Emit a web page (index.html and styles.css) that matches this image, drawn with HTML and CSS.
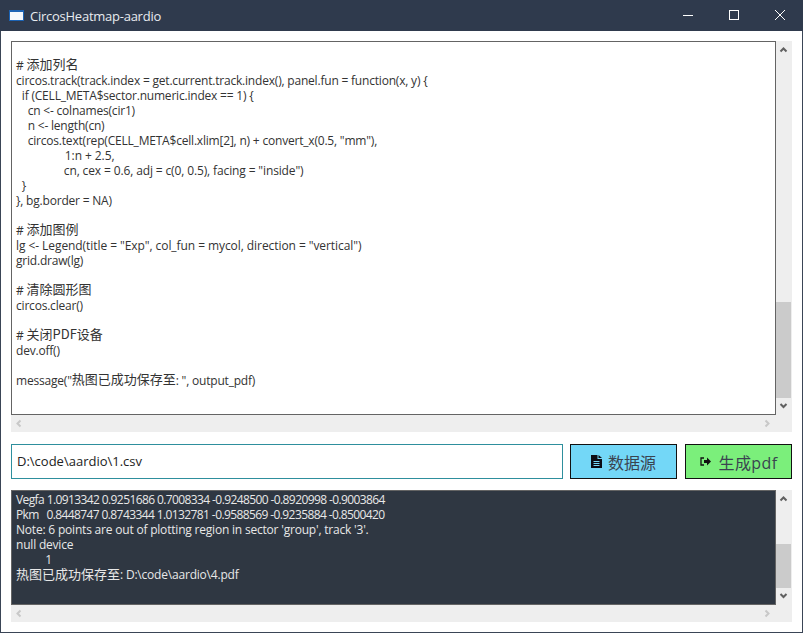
FILE: index.html
```html
<!DOCTYPE html>
<html lang="zh">
<head>
<meta charset="utf-8">
<title>CircosHeatmap-aardio</title>
<link rel="stylesheet" href="styles.css">
</head>
<body>
<div class="window">
  <header class="titlebar">
    <svg class="app-icon" width="15" height="11" viewBox="0 0 15 11"><rect width="15" height="11" fill="#1c63b4"/><rect x="1" y="2" width="13" height="8" fill="#f4f8fc"/></svg>
    <span class="title">CircosHeatmap-aardio</span>
    <div class="controls">
      <svg width="46" height="31" viewBox="0 0 46 31"><path d="M18 15.500h10" stroke="#fff" fill="none"/></svg>
      <svg width="46" height="31" viewBox="0 0 46 31"><rect x="18.500" y="10.500" width="9" height="9" stroke="#fff" fill="none"/></svg>
      <svg width="46" height="31" viewBox="0 0 46 31"><path d="M18 10l10 10M28 10l-10 10" stroke="#fff" fill="none"/></svg>
    </div>
  </header>
  <main class="content">
    <section class="pane pane-code">
      <div class="pane-row">
        <div class="textbox code">
          <div class="line"># <span class="cjk">添加列名</span></div>
          <div class="line">circos.track(track.index = get.current.track.index(), panel.fun = function(x, y) {</div>
          <div class="line">  if (CELL_META$sector.numeric.index == 1) {</div>
          <div class="line">    cn &lt;- colnames(cir1)</div>
          <div class="line">    n &lt;- length(cn)</div>
          <div class="line">    circos.text(rep(CELL_META$cell.xlim[2], n) + convert_x(0.5, "mm"),</div>
          <div class="line loose">                1:n + 2.5,</div>
          <div class="line mid">                cn, cex = 0.6, adj = c(0, 0.5), facing = "inside")</div>
          <div class="line">  }</div>
          <div class="line">}, bg.border = NA)</div>
          <div class="line"> </div>
          <div class="line"># <span class="cjk">添加图例</span></div>
          <div class="line loose">lg &lt;- Legend(title = "Exp", col_fun = mycol, direction = "vertical")</div>
          <div class="line">grid.draw(lg)</div>
          <div class="line"> </div>
          <div class="line"># <span class="cjk">清除圆形图</span></div>
          <div class="line">circos.clear()</div>
          <div class="line"> </div>
          <div class="line"># <span class="cjk">关闭PDF设备</span></div>
          <div class="line">dev.off()</div>
          <div class="line"> </div>
          <div class="line">message("<span class="cjk">热图已成功保存至</span>: ", output_pdf)</div>
        </div>
        <div class="vscroll">
          <svg class="arrow" width="16" height="16" viewBox="0 0 16 16"><path d="M4.500 10.500l3-3 3 3" stroke="#606060" stroke-width="2" fill="none"/></svg>
          <div class="track"></div>
          <div class="thumb thumb-code"></div>
          <svg class="arrow arrow-down" width="16" height="16" viewBox="0 0 16 16"><path d="M4.500 6l3 3 3-3" stroke="#606060" stroke-width="2" fill="none"/></svg>
        </div>
      </div>
      <div class="hscroll">
        <svg width="16" height="17" viewBox="0 0 16 17"><path d="M9.500 5.500l-3 3 3 3" stroke="#c8c8c8" stroke-width="2" fill="none"/></svg>
        <svg class="arrow-end" width="16" height="17" viewBox="0 0 16 17"><path d="M6.500 5.500l3 3-3 3" stroke="#c8c8c8" stroke-width="2" fill="none"/></svg>
      </div>
    </section>
    <section class="toolbar">
      <div class="path-input">D:\code\aardio\1.csv</div>
      <button class="btn btn-blue">
        <svg width="11" height="13" viewBox="0 0 11 13"><path d="M0 0h6.500v4H11v9H0z" fill="#0c0c14"/><path d="M7.500 0L11 3H7.500z" fill="#0c0c14"/><path d="M2.500 6.500h6M2.500 8.500h6M2.500 10.500h6" stroke="#73d7f7"/></svg>
        <span>数据源</span>
      </button>
      <button class="btn btn-green">
        <svg width="11" height="9" viewBox="0 0 11 9"><path d="M4 1H1v7h3" stroke="#111" stroke-width="1.300" fill="none"/><path d="M4 3h3V.5L11 4.500 7 8.500V6H4z" fill="#111"/></svg>
        <span class="btn-wide">生成pdf</span>
      </button>
    </section>
    <section class="pane pane-log">
      <div class="pane-row">
        <div class="textbox log">
          <div class="line nums">Vegfa 1.0913342 0.9251686 0.7008334 -0.9248500 -0.8920998 -0.9003864</div>
          <div class="line nums">Pkm   0.8448747 0.8743344 1.0132781 -0.9588569 -0.9235884 -0.8500420</div>
          <div class="line">Note: 6 points are out of plotting region in sector 'group', track '3'.</div>
          <div class="line">null device</div>
          <div class="line">          1</div>
          <div class="line"><span class="cjk">热图已成功保存至</span>: D:\code\aardio\4.pdf</div>
        </div>
        <div class="vscroll">
          <svg class="arrow" width="16" height="16" viewBox="0 0 16 16"><path d="M4.500 10.500l3-3 3 3" stroke="#606060" stroke-width="2" fill="none"/></svg>
          <div class="track"></div>
          <div class="thumb thumb-log"></div>
          <svg class="arrow arrow-down" width="16" height="16" viewBox="0 0 16 16"><path d="M4.500 6l3 3 3-3" stroke="#606060" stroke-width="2" fill="none"/></svg>
        </div>
      </div>
      <div class="hscroll">
        <svg width="16" height="17" viewBox="0 0 16 17"><path d="M9.500 5.500l-3 3 3 3" stroke="#c8c8c8" stroke-width="2" fill="none"/></svg>
        <svg class="arrow-end" width="16" height="17" viewBox="0 0 16 17"><path d="M6.500 5.500l3 3-3 3" stroke="#c8c8c8" stroke-width="2" fill="none"/></svg>
      </div>
    </section>
  </main>
</div>
</body>
</html>
```
FILE: styles.css
```css
* { box-sizing: border-box; }
html, body { margin: 0; padding: 0; }
body { width: 803px; height: 633px; overflow: hidden; background: #fff; font-family: "Open Sans", "Noto Sans CJK SC", sans-serif; }
.window { width: 803px; height: 633px; display: flex; flex-direction: column; border: 1px solid #3a4556; border-top: 0; }
.titlebar { height: 31px; flex: none; background: #2f3a4d; color: #e8ebef; display: flex; align-items: center; padding-left: 9px; margin: 0 -1px; }
.app-icon { flex: none; }
.title { margin-left: 6px; font-size: 13px; letter-spacing: -0.25px; flex: 1; }
.controls { display: flex; }
.controls svg { display: block; }
.content { flex: 1; display: flex; flex-direction: column; padding: 10px; }
.pane { width: 781px; flex: none; }
.pane-row { display: flex; }
.pane-code .pane-row { height: 374px; }
.pane-log .pane-row { height: 115px; }
.textbox { width: 765px; font-size: 12px; letter-spacing: -0.2px; line-height: 15px; overflow: hidden; padding-left: 4px; border: 1px solid #646464; }
.line { height: 15px; white-space: pre; }
.loose { letter-spacing: -0.07px; }
.mid { letter-spacing: -0.13px; }
.nums { letter-spacing: -0.6px; }
.cjk { font-family: "Noto Sans CJK SC", sans-serif; font-size: 13px; letter-spacing: 0; line-height: 0; }
.code { background: #fff; color: #333; padding-top: 16px; }
.code .cjk { vertical-align: 1px; }
.log { background: #2f3742; color: #e8e8e8; padding-top: 1px; }
.vscroll { width: 16px; display: flex; flex-direction: column; background: #eee; }
.arrow { display: block; flex: none; }
.arrow-down { margin-bottom: 1px; }
.track { flex: 1; }
.thumb { flex: none; background: #cbcbcb; margin: 0 1px 0 0; }
.thumb-code { height: 96px; }
.thumb-log { height: 44px; }
.hscroll { height: 17px; background: #eee; display: flex; justify-content: space-between; }
.arrow-end { margin-right: 17px; }
.toolbar { display: flex; height: 35px; margin: 12px 0 11px; flex: none; }
.path-input { width: 552px; border: 1px solid #2e8f9d; font-size: 13px; line-height: 33px; padding-left: 5px; color: #222; background: #fff; }
.btn { height: 35px; width: 107px; margin-left: 8px; border: 1px solid #111; font-family: inherit; font-size: 16px; color: #3a4450; display: flex; align-items: center; justify-content: center; gap: 6px; padding: 0; }
.btn-wide { letter-spacing: 0.4px; }
.btn-blue { margin-left: 7px; background: #73d7f7; }
.btn-green { background: #7bef7b; gap: 8px; }
```
